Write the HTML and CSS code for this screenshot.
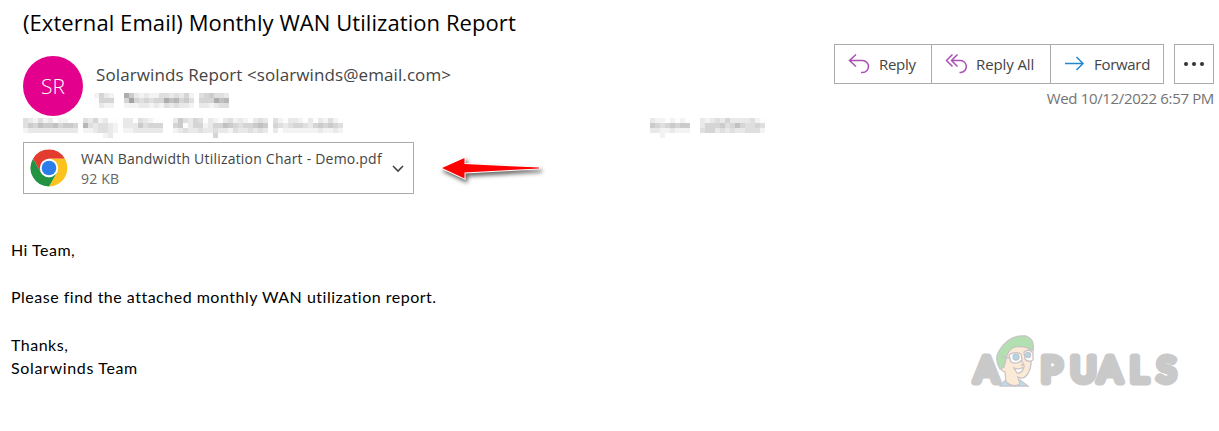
FILE: index.html
```html
<!DOCTYPE html>
<html lang="en">
<head>
	<meta charset="UTF-8">
	<title>Monthly WAN Utilization Report</title>
	<link rel="stylesheet" href="styles.css">
</head>
<body>
<div class="mail">
	<h1 class="subject"><span>(External Email) Monthly WAN Utilization Report</span></h1>
	<div class="mail-head">
		<div class="avatar">SR</div>
		<div class="sender">
			<p class="from">Solarwinds Report &lt;solarwinds@email.com&gt;</p>
			<div class="mosaic" data-name="to"></div>
		</div>
		<div class="mail-side">
			<div class="actions">
				<div class="btn-group">
					<button class="btn reply">
						<svg width="22" height="22" viewBox="0 0 22 22"><path d="M8 1.5L1.5 7.5L8 13.5M1.5 7.5H14.5A5.8 5.8 0 0 1 14.5 19.5H13"/></svg>
						<span>Reply</span>
					</button>
					<button class="btn reply-all">
						<svg width="22" height="22" viewBox="0 0 22 22"><path d="M7.5 1.5L1.5 7.5L7.5 13.5M12.5 1.5L6.5 7.5L12.5 13.5M6.5 7.5H14.5A5.6 5.6 0 0 1 16 19.5H14.5"/></svg>
						<span>Reply All</span>
					</button>
					<button class="btn forward">
						<svg width="22" height="22" viewBox="0 0 22 22"><path d="M1 10.5H19M12.5 4L19 10.5L12.5 17"/></svg>
						<span>Forward</span>
					</button>
				</div>
				<button class="btn more"><i></i><i></i><i></i></button>
			</div>
			<p class="date">Wed 10/12/2022 6:57 PM</p>
		</div>
	</div>
	<div class="policy">
		<div class="mosaic" data-name="retention"></div>
		<div class="mosaic" data-name="expires"></div>
	</div>
	<div class="attach-row">
		<div class="attachment">
			<svg class="chrome" width="38" height="38" viewBox="0 0 38 38">
				<path fill="#e33b2e" d="M3 9.8A18.4 18.4 0 0 1 34.9 9.8H19L11 23.6Z"/>
				<path fill="#fcc31e" d="M34.9 9.8A18.4 18.4 0 0 1 19 37.4L27 23.6L19 9.8Z"/>
				<path fill="#229342" d="M3 9.8L11 23.6Q14 28.2 19 28.2L27 23.6L19 37.4A18.4 18.4 0 0 1 3 9.8Z"/>
				<circle cx="19" cy="19" r="9.2" fill="#fff"/>
				<circle cx="19" cy="19" r="7.3" fill="#2b7de9"/>
			</svg>
			<div class="file">
				<p class="file-name">WAN Bandwidth Utilization Chart - Demo.pdf</p>
				<p class="file-size">92 KB</p>
			</div>
			<svg class="chevron" width="12" height="8" viewBox="0 0 12 8"><path d="M1 1L6 6L11 1"/></svg>
		</div>
		<svg class="pointer" width="112" height="36" viewBox="0 0 112 36">
			<path d="M5 18L27.5 8V14L102 17.6V18.4L27.5 22.5V28.5Z"/>
		</svg>
	</div>
	<div class="mail-body">
		<p>Hi Team,</p>
		<p>Please find the attached monthly WAN utilization report.</p>
		<p>Thanks,</p>
		<p>Solarwinds Team</p>
	</div>
	<svg class="logo" width="216" height="60" viewBox="0 0 216 60">
		<text x="6.5 73 102.5 130 162 189" y="50.5">APUALS</text>
		<g class="face">
			<path fill="#b5e0f0" d="M32 54L38 49Q46 53 52 49L60 55H32Z"/>
			<path fill="#fbead5" d="M33 24L40 15L60 12L63 26Q64 37 59 44Q55 49 50 46L52 53Q45 57 38 51L37 41Q31 39 32 31Z"/>
			<path fill="#b2e0b0" d="M32 38Q26 28 31 20Q41 3 58 5Q67 8 65 20Q57 14 47 16Q40 18 38 28L36 36Z"/>
			<path fill="#fff" d="M41 24Q47 20 53 23L54 29Q49 34 43 31Z"/>
			<path fill="#fff" d="M56 21Q61 17 65 22V29Q60 32 57 28Z"/>
			<circle cx="48" cy="26" r="3" fill="#a9d9ea"/>
			<circle cx="60" cy="24" r="2.6" fill="#a9d9ea"/>
			<path fill="#fff" d="M46 37Q51 39 56 36Q54 43 49 42Z"/>
			<path fill="none" d="M33 25L41 27M53 29L56 34L53 34"/>
		</g>
	</svg>
</div>
<script>
	// one digit per 5px cell, higher is darker, dot is empty
	const mosaics = {
		to: [
			'1421..85212113323241.345332',
			'0444..49434344867453.444867',
			'0211..11122121323221.221233',
		],
		retention: [
			'32131201100.3241200.22032100..2532430210231210232.31022102021310',
			'35465564554.7323321.22253444..4502441244654344565.43234432454543',
			'12222222222.1123321.11222222..1232232232213223232.20111111121121',
			'................12....................4.........................',
		],
		expires: [
			'21101010..2123242222310',
			'54345455..2444534643343',
			'22112111..3442323223331',
			'..1....................',
		],
	};

	document.querySelectorAll('.mosaic').forEach(function (box) {
		mosaics[box.dataset.name].forEach(function (line) {
			const row = document.createElement('div');
			row.className = 'mosaic-row';
			for (const c of line) {
				const cell = document.createElement('i');
				if (c !== '.') {
					const v = 252 - c * 10;
					cell.style.backgroundColor = `rgb(${v}, ${v + 1}, ${v})`;
				}
				row.appendChild(cell);
			}
			box.appendChild(row);
		});
	});
</script>
</body>
</html>
```
FILE: styles.css
```css
* {
	box-sizing: border-box;
}

body {
	margin: 0;
	overflow: hidden;
	background-color: #fff;
	font-family: "Open Sans", "Noto Sans", sans-serif;
}

p, h1 {
	margin: 0;
	white-space: nowrap;
}

.mail {
	position: relative;
	width: 1219px;
	height: 431px;
}

.subject {
	height: 44px;
	padding: 6px 0 0 23px;
	font-size: 22px;
	line-height: 32px;
	font-weight: 400;
	color: #000;
	letter-spacing: 0.07px;
}

.mail-head {
	display: flex;
	height: 74px;
	padding: 0 5px 0 23px;
}

.avatar {
	width: 60px;
	height: 60px;
	margin-top: 12px;
	border-radius: 50%;
	background-color: #e3008c;
	color: #fff;
	font-size: 21px;
	line-height: 61px;
	font-weight: 300;
	text-align: center;
}

.sender {
	padding: 19px 0 0 11px;
}

.from {
	height: 30px;
	padding-left: 2px;
	font-size: 17px;
	line-height: 24px;
	color: #444;
	letter-spacing: 0.1px;
}

.mail-side {
	margin-left: auto;
}

.actions {
	display: flex;
	justify-content: space-between;
	width: 380px;
	height: 40px;
}

.btn-group {
	display: flex;
	width: 330px;
	border: 1px solid #ababab;
}

.btn {
	display: flex;
	align-items: center;
	padding: 0;
	border: none;
	background-color: #fff;
	color: #444;
	font-family: inherit;
	font-size: 15px;
	letter-spacing: -0.3px;
	white-space: nowrap;
}

.btn svg {
	fill: none;
	stroke-width: 1.5;
}

.reply {
	width: 97px;
	padding-left: 13px;
	gap: 9px;
	border-right: 1px solid #ababab;
}

.reply-all {
	width: 119px;
	padding-left: 13px;
	gap: 9px;
	border-right: 1px solid #ababab;
	letter-spacing: -0.1px;
}

.reply svg, .reply-all svg {
	stroke: #a94fb5;
}

.forward {
	width: 112px;
	padding-left: 13px;
	gap: 8px;
}

.forward svg {
	stroke: #2488d0;
}

.more {
	justify-content: center;
	gap: 4px;
	width: 40px;
	border: 1px solid #ababab;
}

.more i {
	width: 4px;
	height: 4px;
	border-radius: 50%;
	background-color: #333;
}

.date {
	margin-top: 3px;
	font-size: 15px;
	line-height: 22px;
	color: #737373;
	text-align: right;
	letter-spacing: -0.35px;
}

.policy {
	display: flex;
	height: 24px;
	padding-left: 23px;
}

.policy .mosaic {
	flex: none;
	width: 627px;
}

.policy .mosaic:last-child {
	width: 115px;
}

.mosaic-row {
	display: flex;
}

.mosaic-row i {
	width: 5px;
	height: 5px;
}

.attach-row {
	display: flex;
	height: 96px;
	padding-left: 23px;
}

.attachment {
	display: flex;
	width: 391px;
	height: 52px;
	padding: 0 9px 0 6px;
	border: 1px solid #ababab;
}

.chrome {
	flex: none;
	margin-top: 6px;
}

.file {
	padding: 6px 0 0 13px;
	font-size: 14px;
	line-height: 20px;
	color: #444;
	letter-spacing: 0.21px;
}

.file-size {
	color: #666;
}

.chevron {
	flex: none;
	margin: 22px 0 0 auto;
	fill: none;
	stroke: #444;
	stroke-width: 1.6;
}

.pointer {
	margin: 8px 0 0 23px;
	fill: #f00;
	stroke: #fff;
	stroke-width: 2;
	paint-order: stroke;
	filter: drop-shadow(2px 3px 2px rgba(0, 0, 0, 0.6));
}

.mail-body {
	padding-left: 11px;
	font-family: Lato, sans-serif;
	font-size: 16px;
	line-height: 23px;
	color: #000;
	letter-spacing: 0.5px;
}

.mail-body p {
	margin-bottom: 24px;
}

.mail-body p:nth-child(2) {
	margin-bottom: 25px;
}

.mail-body p:nth-child(3) {
	margin-bottom: 0;
}

.mail-body p:nth-child(4) {
	letter-spacing: 0.65px;
}

.logo {
	position: absolute;
	left: 968px;
	top: 331px;
}

.logo text {
	font-family: Lato, sans-serif;
	font-size: 35px;
	font-weight: 400;
	fill: #c9c9c9;
	stroke: #c9c9c9;
	stroke-width: 7;
	stroke-linejoin: round;
}

.face {
	stroke: #c9c4c7;
	stroke-width: 1.3;
}
```
